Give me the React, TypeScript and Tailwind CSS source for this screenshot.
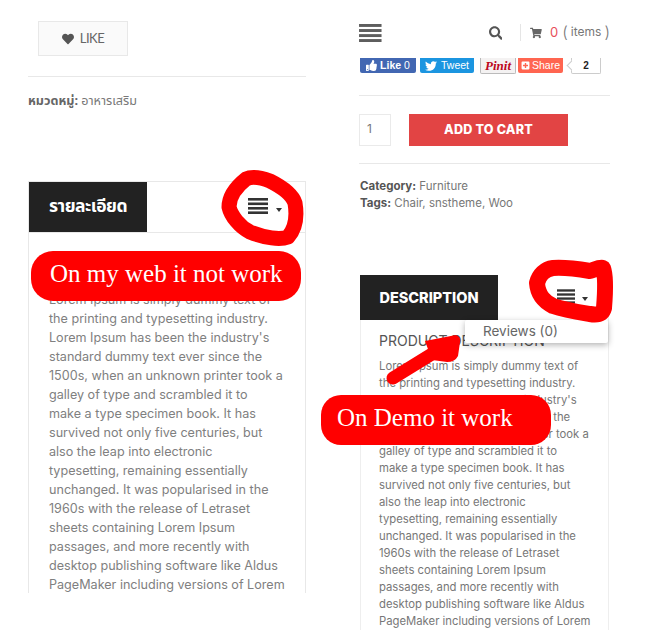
import { FaHeart, FaSearch, FaShoppingCart, FaThumbsUp, FaTwitter, FaPlusSquare } from "react-icons/fa";

const POPPINS = "font-['Inter','Noto_Sans',sans-serif]";

const lines = [
  "Lorem Ipsum is simply dummy text of",
  "the printing and typesetting industry.",
  "Lorem Ipsum has been the industry's",
  "standard dummy text ever since the",
  "1500s, when an unknown printer took a",
  "galley of type and scrambled it to",
  "make a type specimen book. It has",
  "survived not only five centuries, but",
  "also the leap into electronic",
  "typesetting, remaining essentially",
  "unchanged. It was popularised in the",
  "1960s with the release of Letraset",
  "sheets containing Lorem Ipsum",
  "passages, and more recently with",
  "desktop publishing software like Aldus",
  "PageMaker including versions of Lorem",
];

function Burger({ w, h, color }: { w: number; h: number; color: string }) {
  return (
    <svg width={w} height={h} viewBox="0 0 20 16">
      <g fill={color}>
        <rect x="0" y="0" width="20" height="2.6" />
        <rect x="0" y="4.5" width="20" height="2.6" />
        <rect x="0" y="9" width="20" height="2.6" />
        <rect x="0" y="13.4" width="20" height="2.6" />
      </g>
    </svg>
  );
}

function Caret() {
  return <div className="w-0 h-0 border-x-[3.5px] border-x-transparent border-t-[4px] border-t-[#333]" />;
}

function Social() {
  return (
    <div className="flex items-start h-[16px] mt-[17px] ml-[1px] font-['Liberation_Sans',sans-serif] text-[10.5px] text-white">
      <div className="w-[56px] h-[15px] bg-[#4267b2] rounded-b-[2px] flex items-center justify-center gap-[3px]">
        <FaThumbsUp className="text-[11px]" />
        <span className="font-bold">Like</span>
        <span>0</span>
      </div>
      <div className="ml-[4px] w-[54px] h-[15px] bg-[#1b95e0] rounded-b-[2px] flex items-center justify-center gap-[4px]">
        <FaTwitter className="text-[12px]" />
        <span>Tweet</span>
      </div>
      <div className="ml-[6px] w-[36px] h-[16px] bg-[#f4f2f2] border border-[#bbb] border-t-0 rounded-b-[2px] flex items-center justify-center font-['Liberation_Serif',serif] italic font-bold text-[13px] leading-[14px] text-[#bd081c]">
        Pinit
      </div>
      <div className="ml-[2px] w-[45px] h-[15px] bg-[#ff6550] rounded-b-[2px] flex items-center justify-center gap-[2px]">
        <FaPlusSquare className="text-[9px]" />
        <span>Share</span>
      </div>
      <div className="relative ml-[8px] w-[30px] h-[16px] bg-white border-x border-b border-[#ccc] rounded-b-[2px] flex items-center justify-center font-bold text-[10px] text-[#222]">
        <div className="absolute left-[-4px] top-[4px] w-[7px] h-[7px] rotate-45 bg-white border-l border-b border-[#ccc]" />
        <span className="relative">2</span>
      </div>
    </div>
  );
}

export default function App() {
  return (
    <div className={`relative w-[657px] h-[630px] overflow-hidden bg-white flex items-start ${POPPINS}`}>
      {/* left column */}
      <div className="ml-[28px] w-[278px] shrink-0">
        <div className="mt-[21px] ml-[10px] w-[90px] h-[35px] bg-[#fafafa] border border-[#e8e8e8] flex items-center justify-center gap-[6px] text-[#666]">
          <FaHeart className="text-[12px] text-[#555]" />
          <span className="text-[13px] tracking-[-0.5px] font-['Lato',sans-serif]">LIKE</span>
        </div>
        <div className="mt-[20px] h-px bg-[#e8e8e8]" />
        <div className="mt-[15px] h-[20px] text-[12.6px] leading-[20px] text-[#777] font-['Noto_Sans_Thai','Noto_Sans',sans-serif]">
          <b className="text-[#666]">หมวดหมู่:</b> อาหารเสริม
        </div>
        <div className="mt-[69px] h-[412px] border-x border-t border-[#e8e8e8] overflow-hidden">
          <div className="h-[51px] border-b border-[#e8e8e8] flex items-start">
            <div className="w-[118px] h-[50px] bg-[#222] text-white text-[17.5px] font-bold tracking-[-0.5px] flex items-center justify-center font-['Noto_Sans_Thai','Noto_Sans',sans-serif]">
              รายละเอียด
            </div>
            <div className="ml-auto mr-[23px] h-[50px] flex items-center gap-[8px]">
              <div className="-mt-[2px]"><Burger w={20} h={16} color="#333" /></div>
              <div className="mt-[6px]"><Caret /></div>
            </div>
          </div>
          <div className="pl-[20px] pt-[57px] text-[12.6px] leading-[19px] text-[#808080] whitespace-nowrap">
            {lines.map((l) => (
              <div key={l}>{l}</div>
            ))}
          </div>
        </div>
      </div>

      {/* right column */}
      <div className="ml-[53px] w-[251px] shrink-0">
        <div className="mt-[24px] h-[17px] flex items-center">
          <Burger w={23} h={18} color="#5e5e5e" />
          <FaSearch className="ml-[107px] text-[14px] text-[#555]" />
          <div className="ml-[18px] w-px h-[17px] bg-[#e5e5e5]" />
          <FaShoppingCart className="ml-[9px] text-[12px] text-[#666]" />
          <span className="ml-[8px] text-[13px] text-[#e8505b]">0</span>
          <span className="ml-[4px] text-[12px] text-[#777] whitespace-nowrap flex items-center gap-[3px] -mt-[1px]">
            <span className="text-[16px] font-light">(</span>
            <span>items</span>
            <span className="text-[16px] font-light">)</span>
          </span>
        </div>
        <Social />
        <div className="mt-[21px] h-px bg-[#e8e8e8]" />
        <div className="mt-[18px] flex items-start">
          <div className="w-[32px] h-[32px] border border-[#eaeaea] pl-[7px] text-[12px] leading-[28px] text-[#777]">1</div>
          <div className="ml-[18px] w-[159px] h-[32px] bg-[#e24444] text-white text-[12.6px] font-extrabold tracking-[0.2px] flex items-center justify-center">
            ADD TO CART
          </div>
        </div>
        <div className="mt-[17px] h-px bg-[#e8e8e8]" />
        <div className="mt-[14px] ml-[1px] text-[11.5px] leading-[17px] text-[#777]">
          <div><b className="text-[#555]">Category:</b> Furniture</div>
          <div><b className="text-[#555]">Tags:</b> Chair, snstheme, Woo</div>
        </div>
        <div className="relative mt-[63px] h-[400px] ml-[1px] w-[249px] border-x border-[#eeeeee]">
          <div className="h-[45px] flex items-start">
            <div className="-ml-px w-[138px] h-[45px] bg-[#222] text-white text-[14.5px] font-extrabold flex items-center justify-center">
              DESCRIPTION
            </div>
            <div className="ml-auto mr-[20px] h-[45px] flex items-center gap-[7px]">
              <div className="-mt-[2px]"><Burger w={18} h={15} color="#333" /></div>
              <div className="mt-[3px]"><Caret /></div>
            </div>
          </div>
          <div className="pl-[18px] pt-[12px] whitespace-nowrap">
            <div className="text-[14px] leading-[18px] text-[#555]">PRODUCT DESCRIPTION</div>
            <div className="mt-[8px] text-[11.3px] leading-[17px] text-[#777]">
              {lines.map((l) => (
                <div key={l}>{l}</div>
              ))}
            </div>
          </div>
          <div className="absolute left-[104px] top-[45px] w-[143px] h-[23px] bg-white rounded-[2px] shadow-[0_2px_6px_rgba(0,0,0,0.3)] pl-[18px] text-[13.5px] leading-[22px] text-[#666]">
            Reviews (0)
          </div>
        </div>
      </div>

      {/* red hand-drawn annotations */}
      <svg className="absolute left-0 top-0" width="657" height="630" viewBox="0 0 657 630" fill="none">
        <path
          d="M246 179 C252 176 262 178 270 181 C282 187 292 194 295 203 C297 215 296 228 288 237 C280 240 265 238 250 232 C240 227 231 216 229 207 C229 197 236 187 246 179 Z"
          stroke="#ff0000" strokeWidth="15" strokeLinejoin="round"
        />
        <path
          d="M537 283 C539 275 545 269 553 268 C566 267 578 269 590 271 C596 269 600 267 603 268 C606 276 605 296 604 308 C602 315 596 315 590 314 C578 312 565 310 553 306 C545 302 538 296 537 283 Z"
          stroke="#ff0000" strokeWidth="16" strokeLinejoin="round"
        />
        <path d="M393 378 L440 349" stroke="#ff0000" strokeWidth="13" strokeLinecap="round" />
        <path d="M425 341 L456 335 Q461 337 460 342 L458 356 Q455 362 447 362 L432 360 Z" fill="#ff0000" />
      </svg>
      <div className="absolute left-[31px] top-[251px] w-[270px] h-[50px] rounded-[22px] bg-[#ff0000] text-white font-['Liberation_Serif',serif] text-[25px] leading-[46px] pl-[19px] whitespace-nowrap">
        On my web it not work
      </div>
      <div className="absolute left-[321px] top-[395px] w-[230px] h-[50px] rounded-[20px] bg-[#ff0000] text-white font-['Liberation_Serif',serif] text-[25px] leading-[46px] pl-[16px] whitespace-nowrap">
        On Demo it work
      </div>
    </div>
  );
}
